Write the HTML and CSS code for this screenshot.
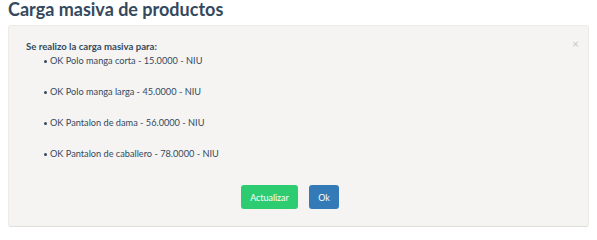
FILE: index.html
```html
<!DOCTYPE html>
<html>
<head>
<meta charset="utf-8">
<link rel="stylesheet" href="styles.css">
</head>
<body>
<h2 class="title">Carga masiva de productos</h2>
<div class="panel">
  <span class="close">×</span>
  <div class="msg">
    <strong class="lead">Se realizo la carga masiva para:</strong>
    <ul class="items">
      <li>OK Polo manga corta - 15.0000 - NIU</li>
      <li>OK Polo manga larga - 45.0000 - NIU</li>
      <li>OK Pantalon de dama - 56.0000 - NIU</li>
      <li>OK Pantalon de caballero - 78.0000 - NIU</li>
    </ul>
  </div>
  <div class="actions">
    <button class="btn btn-green">Actualizar</button>
    <button class="btn btn-blue">Ok</button>
  </div>
</div>
</body>
</html>
```
FILE: styles.css
```css
html, body { margin: 0; padding: 0; background: #fff; }
body { font-family: Lato, "Liberation Sans", sans-serif; color: #34495e; padding: 0 8px; }
.title { margin: 0; font-size: 18px; font-weight: 700; line-height: 16px; padding-top: 1px; color: #34495e; height: 24px; }
.panel { position: relative; background: #f5f4f2; border: 1px solid #ecebe8; border-bottom-color: #e0dfdc; border-radius: 3px; height: 202px; box-sizing: border-box; padding: 14px 17px 0 17px; }
.close { position: absolute; right: 9px; top: 12px; font-size: 12px; color: #c8c8c8; line-height: 12px; }
.msg { font-size: 9.2px; line-height: 14px; color: #34495e; }
.lead { font-weight: 700; display: block; font-size: 9.6px; }
.items { margin: 0; padding-left: 24px; list-style: none; }
.items li { height: 31px; line-height: 14px; position: relative; }
.items li::before { content: ""; position: absolute; left: -6px; top: 6px; width: 3px; height: 3px; border-radius: 50%; background: #34495e; }
.actions { display: flex; justify-content: center; gap: 11px; margin-top: 7px; margin-right: 17px; }
.btn { font-family: Lato, "Liberation Sans", sans-serif; font-size: 8.9px; color: #fff; border: none; border-radius: 3px; height: 24px; padding: 0 6px; }
.btn-green { background: #2ecc71; width: 57px; }
.btn-blue { background: #337ab7; width: 30px; }
```
